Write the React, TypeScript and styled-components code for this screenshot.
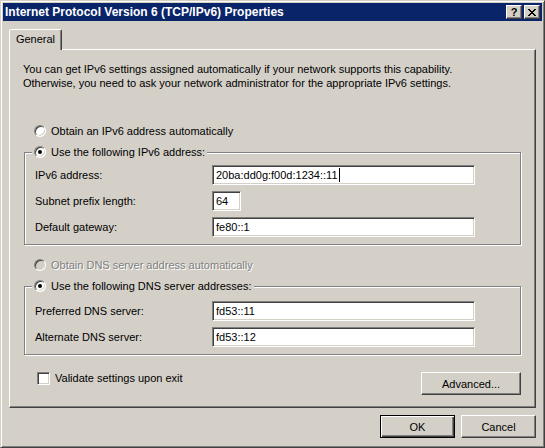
import React from "react";
import styled, { createGlobalStyle } from "styled-components";

const FONT = `"Liberation Sans", Arial, sans-serif`;

const Global = createGlobalStyle`
  html, body { margin: 0; padding: 0; background: #d4d0c8; }
  body { font-family: ${FONT}; font-size: 11px; color: #000; }
  * { box-sizing: border-box; }
`;

const Window = styled.div`
  width: 545px;
  height: 448px;
  background: #d4d0c8;
  border: 1px solid;
  border-color: #d4d0c8 #404040 #404040 #d4d0c8;
  box-shadow: inset 1px 1px 0 #fff, inset -1px -1px 0 #808080;
  padding: 2px;
  display: flex;
  flex-direction: column;
`;

const TitleBar = styled.div`
  height: 18px;
  background: #0a246a;
  display: flex;
  align-items: center;
  padding: 0 2px 0 2px;
  gap: 2px;
`;

const Title = styled.div`
  flex: 1;
  color: #fff;
  font-weight: bold;
  font-size: 12px;
  line-height: 18px;
  white-space: nowrap;
`;

const CaptionButton = styled.div`
  width: 16px;
  height: 14px;
  background: #d4d0c8;
  border: 1px solid;
  border-color: #fff #404040 #404040 #fff;
  box-shadow: inset -1px -1px 0 #808080;
  display: flex;
  align-items: center;
  justify-content: center;
  font-weight: bold;
  font-size: 11px;
  line-height: 1;
`;

const Body = styled.div`
  flex: 1;
  display: flex;
  flex-direction: column;
  padding: 8px 6px 7px 6px;
`;

const TabStrip = styled.div`
  height: 20px;
  display: flex;
`;

const Tab = styled.div`
  position: relative;
  z-index: 1;
  width: 53px;
  height: 21px;
  margin-bottom: -1px;
  background: #d4d0c8;
  border: 1px solid;
  border-bottom: none;
  border-color: #fff #404040 transparent #fff;
  border-radius: 2px 2px 0 0;
  box-shadow: inset -1px 0 0 #808080;
  display: flex;
  align-items: center;
  justify-content: center;
  padding-bottom: 2px;
`;

const Panel = styled.div`
  height: 359px;
  border: 1px solid;
  border-color: #fff #404040 #404040 #fff;
  box-shadow: inset -1px -1px 0 #808080;
  display: flex;
  flex-direction: column;
  align-items: flex-start;
  padding: 12px 13px 0 14px;
`;

const Intro = styled.p`
  margin: 0 0 0 -1px;
  line-height: 14px;
`;

const OptionRow = styled.div<{ $top: number; $disabled?: boolean }>`
  display: flex;
  align-items: center;
  gap: 5px;
  height: 14px;
  line-height: 14px;
  margin: ${(p) => p.$top}px 0 0 10px;
  color: ${(p) => (p.$disabled ? "#808080" : "#000")};
  text-shadow: ${(p) => (p.$disabled ? "1px 1px 0 #fff" : "none")};
  white-space: nowrap;
`;

const Radio = styled.span<{ $checked?: boolean; $disabled?: boolean }>`
  width: 12px;
  height: 12px;
  border-radius: 50%;
  border: 1px solid;
  border-color: #808080 #fff #fff #808080;
  box-shadow: inset 1px 1px 0 #404040, inset -1px -1px 0 #d4d0c8;
  background: ${(p) => (p.$disabled ? "#d4d0c8" : "#fff")};
  display: flex;
  align-items: center;
  justify-content: center;
  flex: none;
  &::after {
    content: "";
    width: 4px;
    height: 4px;
    border-radius: 50%;
    background: #000;
    display: ${(p) => (p.$checked ? "block" : "none")};
  }
`;

const Group = styled.div<{ $top: number }>`
  width: 497px;
  margin-top: ${(p) => p.$top}px;
  border: 1px solid #808080;
  box-shadow: inset 1px 1px 0 #fff, 1px 1px 0 #fff;
  display: flex;
  flex-direction: column;
  align-items: flex-start;
  padding: 0 0 7px 10px;
`;

const Legend = styled.div`
  display: flex;
  align-items: center;
  gap: 5px;
  height: 14px;
  margin: -8px 0 0 -3px;
  padding: 0 2px;
  background: #d4d0c8;
  white-space: nowrap;
`;

const Fields = styled.div<{ $top: number }>`
  display: grid;
  grid-template-columns: 177px auto;
  grid-auto-rows: 20px;
  row-gap: 6px;
  margin-top: ${(p) => p.$top}px;
  align-items: center;
`;

const Label = styled.div`
  line-height: 14px;
`;

const TextBox = styled.div<{ $w: number }>`
  width: ${(p) => p.$w}px;
  height: 20px;
  background: #fff;
  border: 1px solid;
  border-color: #808080 #fff #fff #808080;
  box-shadow: inset 1px 1px 0 #404040, inset -1px -1px 0 #d4d0c8;
  padding: 0 3px;
  display: flex;
  align-items: center;
  white-space: nowrap;
`;

const Caret = styled.span`
  display: inline-block;
  width: 1px;
  height: 14px;
  margin-left: 1px;
  background: #000;
`;

const Footer = styled.div`
  width: 497px;
  margin-top: 17px;
  display: flex;
  justify-content: space-between;
  align-items: flex-start;
`;

const CheckRow = styled.div`
  display: flex;
  align-items: center;
  gap: 5px;
  margin: -1px 0 0 13px;
  height: 14px;
  white-space: nowrap;
`;

const CheckBox = styled.span`
  width: 13px;
  height: 13px;
  background: #fff;
  border: 1px solid;
  border-color: #808080 #fff #fff #808080;
  box-shadow: inset 1px 1px 0 #404040, inset -1px -1px 0 #d4d0c8;
  flex: none;
`;

const Button = styled.div<{ $w: number; $default?: boolean }>`
  width: ${(p) => p.$w}px;
  height: 23px;
  background: #d4d0c8;
  border: 1px solid;
  border-color: ${(p) =>
    p.$default ? "#000" : "#fff #404040 #404040 #fff"};
  box-shadow: ${(p) =>
    p.$default
      ? "inset 1px 1px 0 #fff, inset -1px -1px 0 #404040, inset -2px -2px 0 #808080"
      : "inset -1px -1px 0 #808080"};
  display: flex;
  align-items: center;
  justify-content: center;
  line-height: 14px;
`;

const ButtonRow = styled.div`
  margin-top: 7px;
  display: flex;
  justify-content: flex-end;
  gap: 6px;
`;

const CloseGlyph = () => (
  <svg width="8" height="7" viewBox="0 0 8 7" shapeRendering="crispEdges">
    <path d="M0 0h2v1h-2z M6 0h2v1h-2z M1 1h2v1h-2z M5 1h2v1h-2z M2 2h4v1h-4z M3 3h2v1h-2z M2 4h4v1h-4z M1 5h2v1h-2z M5 5h2v1h-2z M0 6h2v1h-2z M6 6h2v1h-2z" fill="#000" />
  </svg>
);

export default function App() {
  return (
    <>
      <Global />
      <Window>
        <TitleBar>
          <Title>Internet Protocol Version 6 (TCP/IPv6) Properties</Title>
          <CaptionButton>?</CaptionButton>
          <CaptionButton>
            <CloseGlyph />
          </CaptionButton>
        </TitleBar>
        <Body>
          <TabStrip>
            <Tab>General</Tab>
          </TabStrip>
          <Panel>
            <Intro>
              You can get IPv6 settings assigned automatically if your network supports this capability.
              <br />
              Otherwise, you need to ask your network administrator for the appropriate IPv6 settings.
            </Intro>
            <OptionRow $top={34}>
              <Radio />
              Obtain an IPv6 address automatically
            </OptionRow>
            <Group $top={14}>
              <Legend>
                <Radio $checked />
                Use the following IPv6 address:
              </Legend>
              <Fields $top={6}>
                <Label>IPv6 address:</Label>
                <TextBox $w={263}>
                  20ba:dd0g:f00d:1234::11
                  <Caret />
                </TextBox>
                <Label>Subnet prefix length:</Label>
                <TextBox $w={29}>64</TextBox>
                <Label>Default gateway:</Label>
                <TextBox $w={263}>fe80::1</TextBox>
              </Fields>
            </Group>
            <OptionRow $top={13} $disabled>
              <Radio $disabled />
              Obtain DNS server address automatically
            </OptionRow>
            <Group $top={14}>
              <Legend>
                <Radio $checked />
                Use the following DNS server addresses:
              </Legend>
              <Fields $top={8}>
                <Label>Preferred DNS server:</Label>
                <TextBox $w={263}>fd53::11</TextBox>
                <Label>Alternate DNS server:</Label>
                <TextBox $w={263}>fd53::12</TextBox>
              </Fields>
            </Group>
            <Footer>
              <CheckRow>
                <CheckBox />
                Validate settings upon exit
              </CheckRow>
              <Button $w={100}>Advanced...</Button>
            </Footer>
          </Panel>
          <ButtonRow>
            <Button $w={75} $default>OK</Button>
            <Button $w={75}>Cancel</Button>
          </ButtonRow>
        </Body>
      </Window>
    </>
  );
}
